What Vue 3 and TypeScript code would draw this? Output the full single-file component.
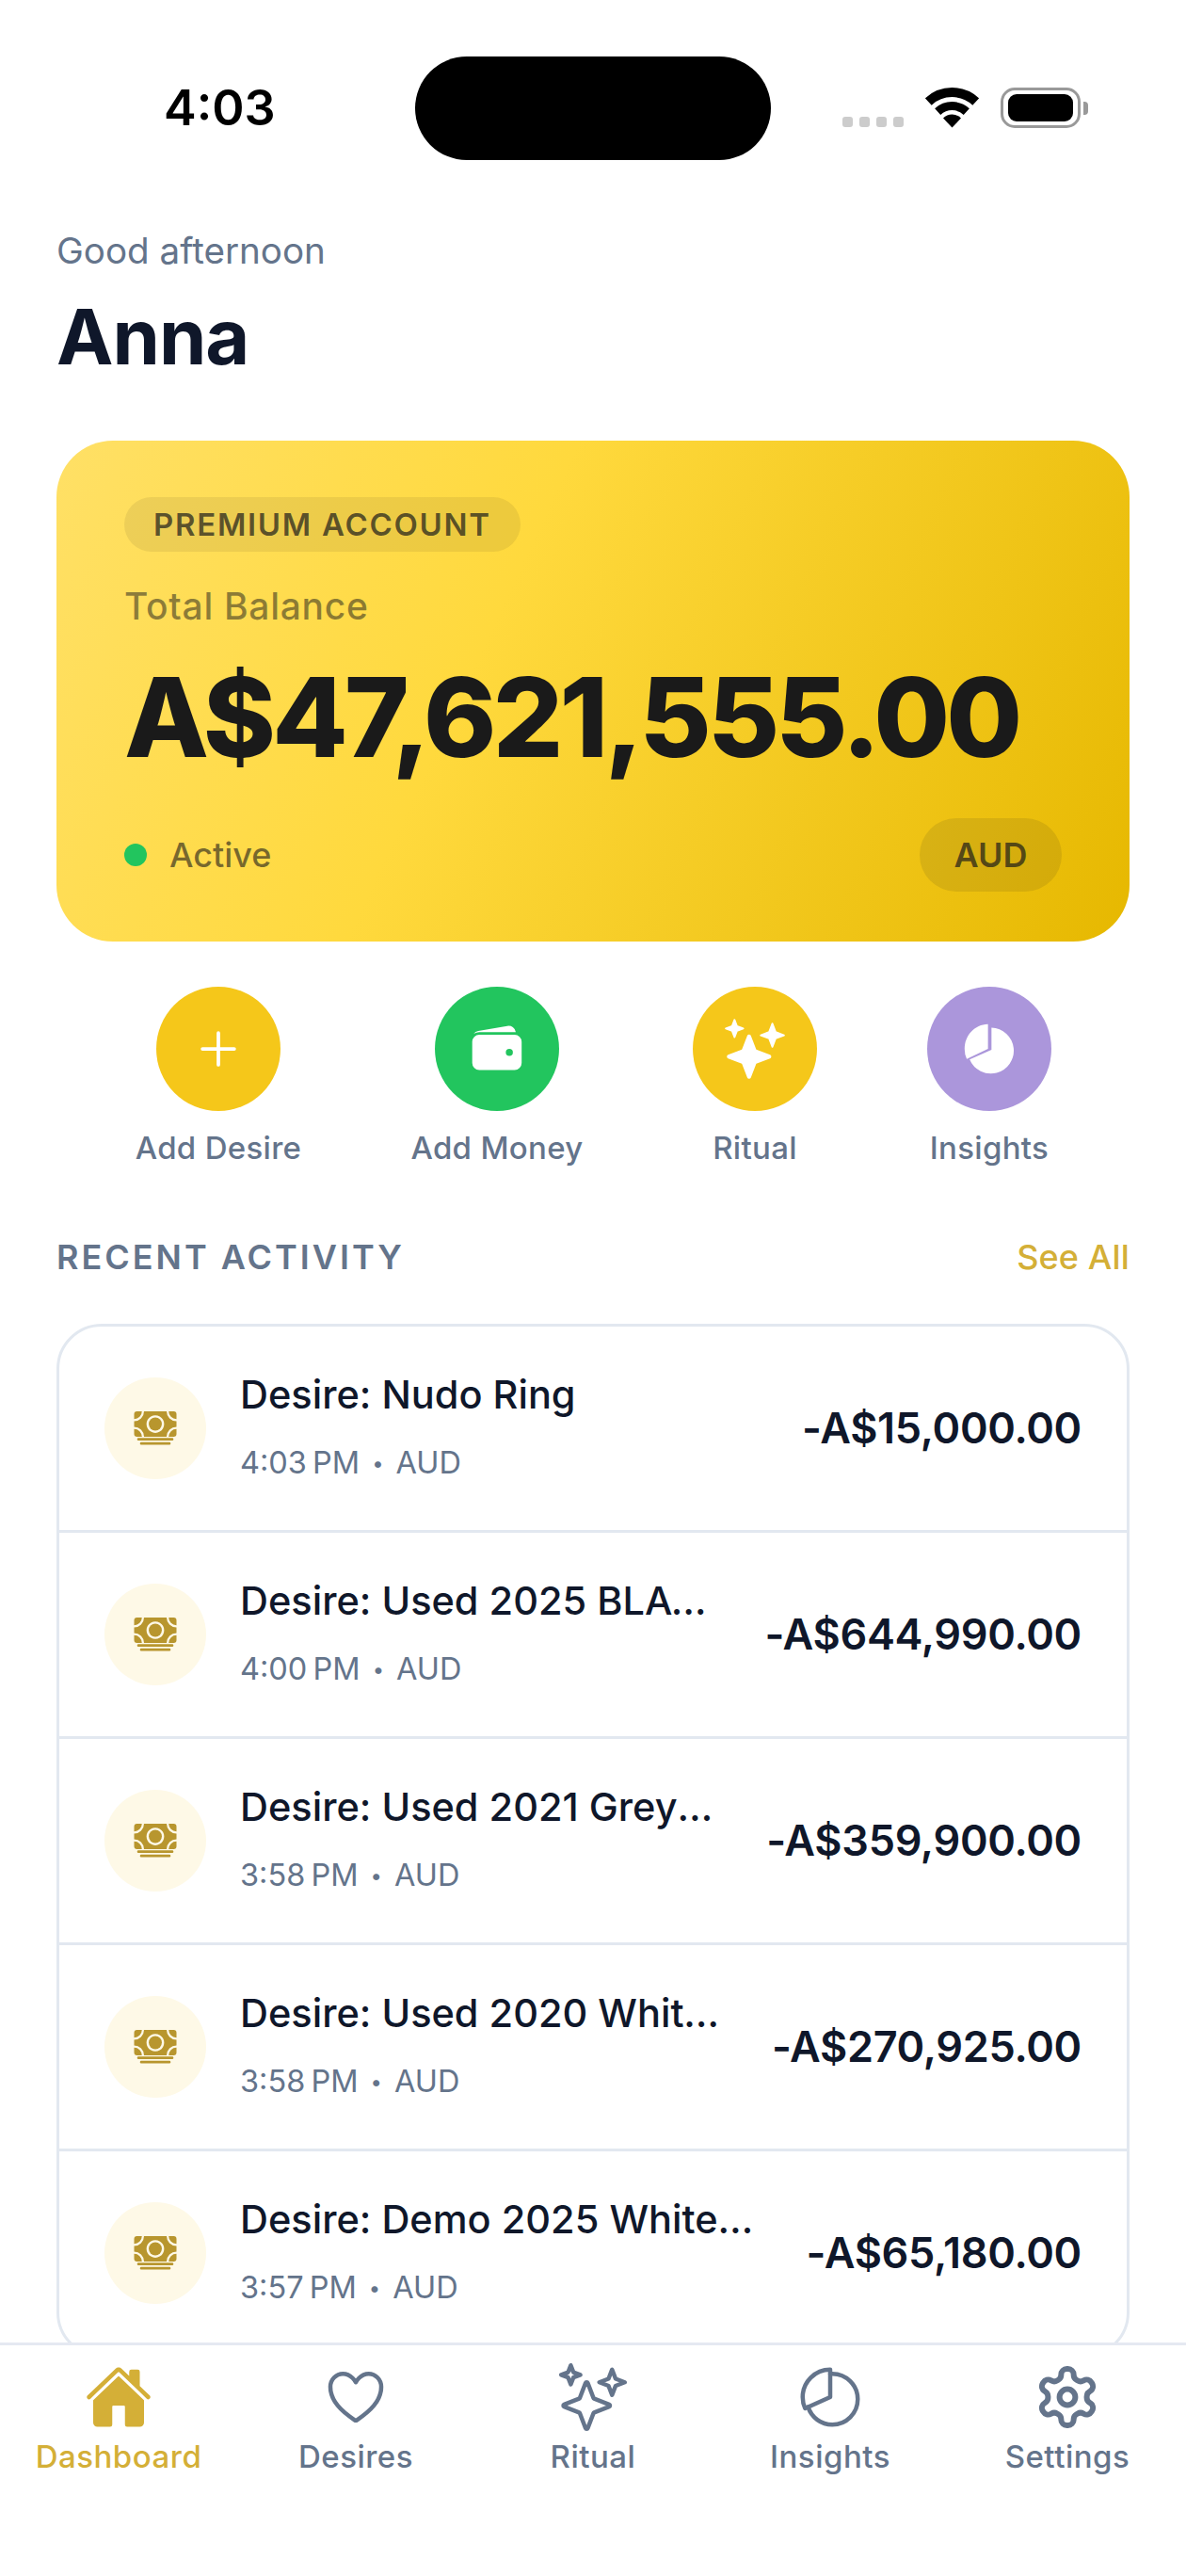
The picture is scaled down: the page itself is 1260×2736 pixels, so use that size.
<script setup lang="ts">
interface Row { title: string; time: string; amount: string }
const rows: Row[] = [
  { title: 'Desire: Nudo Ring', time: '4:03 PM', amount: '-A$15,000.00' },
  { title: 'Desire: Used 2025 BLACK Range Rover Sport', time: '4:00 PM', amount: '-A$644,990.00' },
  { title: 'Desire: Used 2021 Grey Porsche Cayenne', time: '3:58 PM', amount: '-A$359,900.00' },
  { title: 'Desire: Used 2020 White Mercedes G63', time: '3:58 PM', amount: '-A$270,925.00' },
  { title: 'Desire: Demo 2025 White Audi Q7', time: '3:57 PM', amount: '-A$65,180.00' },
]
</script>

<template>
  <div class="app">
    <header class="status">
      <span class="time">4:03</span>
      <div class="island"></div>
      <div class="sys">
        <div class="dots"><i></i><i></i><i></i><i></i></div>
        <svg class="wifi" width="57" height="43" viewBox="0 0 57 43">
          <path d="M3.3 15 A37 37 0 0 1 53.7 15" fill="none" stroke="#000" stroke-width="10" />
          <path d="M13.2 25.6 A22.5 22.5 0 0 1 43.8 25.6" fill="none" stroke="#000" stroke-width="9" />
          <path d="M28.5 42.5 L19 32.5 A13.5 13.5 0 0 1 38 32.5 Z" fill="#000" />
        </svg>
        <div class="battery"><div class="cell"></div></div>
        <div class="nub"></div>
      </div>
    </header>

    <main class="content">
      <p class="hello">Good afternoon</p>
      <h1 class="name">Anna</h1>

      <section class="card">
        <span class="badge">PREMIUM ACCOUNT</span>
        <p class="total">Total Balance</p>
        <p class="balance">A$47,621,555.00</p>
        <div class="card-foot">
          <div class="active"><span class="dot"></span>Active</div>
          <span class="cur">AUD</span>
        </div>
      </section>

      <div class="actions">
        <div class="act a1">
          <div class="circle gold">
            <svg width="60" height="60" viewBox="0 0 512 512" fill="none" stroke="#fff" stroke-width="32" stroke-linecap="round"><path d="M256 112v288M400 256H112" /></svg>
          </div>
          <span>Add Desire</span>
        </div>
        <div class="act a2">
          <div class="circle green">
            <svg width="60" height="60" viewBox="0 0 512 512" fill="#fff"><path d="M95.5 104h320a87.73 87.73 0 0111.18.71 66 66 0 00-77.51-55.56L86 94.08h-.3a66 66 0 00-41.07 26.13A87.57 87.57 0 0195.5 104z" /><path fill-rule="evenodd" d="M415.5 128h-320a64.07 64.07 0 00-64 64v192a64.07 64.07 0 0064 64h320a64.07 64.07 0 0064-64V192a64.07 64.07 0 00-64-64zM368 320a32 32 0 1132-32 32 32 0 01-32 32z" /></svg>
          </div>
          <span>Add Money</span>
        </div>
        <div class="act a3">
          <div class="circle gold">
            <svg width="66" height="66" viewBox="0 0 512 512" fill="#fff" stroke="#fff" stroke-width="14" stroke-linejoin="round"><path d="M259.92 262.91L216.4 149.77a9 9 0 00-16.8 0l-43.52 113.14a9 9 0 01-5.17 5.17L37.77 311.6a9 9 0 000 16.8l113.14 43.52a9 9 0 015.17 5.17l43.52 113.14a9 9 0 0016.8 0l43.52-113.14a9 9 0 015.17-5.17l113.14-43.52a9 9 0 000-16.8l-113.14-43.52a9 9 0 01-5.17-5.17z" /><path d="M108 68L88 16 68 68 16 88l52 20 20 52 20-52 52-20-52-20z" /><path d="M426.67 117.33L400 48l-26.67 69.33L304 144l69.33 26.67L400 240l26.67-69.33L496 144l-69.33-26.67z" /></svg>
          </div>
          <span>Ritual</span>
        </div>
        <div class="act a4">
          <div class="circle purple">
            <svg width="60" height="60" viewBox="0 0 512 512" fill="#fff"><path d="M244 32C122 36 32 134 32 256a224 224 0 0 0 20 92L244 256z" /><path d="M276 64A208 208 0 1 1 78 352L276 264z" /></svg>
          </div>
          <span>Insights</span>
        </div>
      </div>

      <div class="section-head">
        <h2>RECENT ACTIVITY</h2>
        <span class="see">See All</span>
      </div>

      <div class="list">
        <div v-for="r in rows" :key="r.title" class="row">
          <div class="ico">
            <svg width="48" height="48" viewBox="0 0 512 512" fill="#B8962E"><path d="M64 366H448a14 14 0 0 1 0 28H64a14 14 0 0 1 0-28zM96 414H416a14 14 0 0 1 0 28H96a14 14 0 0 1 0-28z" /><path fill-rule="evenodd" d="M128 64H384A112 112 0 0 0 496 176V240A112 112 0 0 0 384 352H128A112 112 0 0 0 16 240V176A112 112 0 0 0 128 64ZM256 108a100 100 0 1 0 .01 0Z" /><circle cx="256" cy="208" r="74" /><path d="M16 152A88 88 0 0 0 104 64H48A32 32 0 0 0 16 96ZM408 64A88 88 0 0 0 496 152V96A32 32 0 0 0 464 64ZM16 264A88 88 0 0 1 104 352H48A32 32 0 0 1 16 320ZM408 352A88 88 0 0 1 496 264V320A32 32 0 0 1 464 352Z" /></svg>
          </div>
          <div class="txt">
            <div class="title">{{ r.title }}</div>
            <div class="meta"><span class="clock">{{ r.time }}</span><span class="sep">•</span><span>AUD</span></div>
          </div>
          <div class="amt">{{ r.amount }}</div>
        </div>
      </div>
    </main>

    <nav class="tabs">
      <div class="tab on">
        <svg width="72" height="72" viewBox="0 0 512 512" fill="currentColor"><path d="M261.56 101.28a8 8 0 00-11.06 0L66.4 277.15a8 8 0 00-2.47 5.79L63.9 448a32 32 0 0032 32H192a16 16 0 0016-16V328a8 8 0 018-8h80a8 8 0 018 8v136a16 16 0 0016 16h96.06a32 32 0 0032-32V282.94a8 8 0 00-2.47-5.79z" /><path d="M490.91 244.15l-74.8-71.56V64a16 16 0 00-16-16h-48a16 16 0 00-16 16v32l-57.92-55.38C272.77 35.14 264.71 32 256 32c-8.68 0-16.72 3.14-22.14 8.63l-212.7 203.5c-6.22 6-7 15.87-1.34 22.37A16 16 0 0043 267.56L250.5 69.28a8 8 0 0111.06 0l207.52 198.28a16 16 0 0022.59-.44c6.14-6.36 5.63-16.86-.76-22.97z" /></svg>
        <span>Dashboard</span>
      </div>
      <div class="tab">
        <svg width="72" height="72" viewBox="0 0 512 512" fill="none" stroke="currentColor" stroke-width="32" stroke-linecap="round" stroke-linejoin="round"><path d="M352.92 80C288 80 256 144 256 144s-32-64-96.92-64c-52.76 0-94.54 44.14-95.08 96.81-1.1 109.33 86.73 187.08 183 252.42a16 16 0 0018 0c96.26-65.34 184.09-143.09 183-252.42-.54-52.67-42.32-96.81-95.08-96.81z" /></svg>
        <span>Desires</span>
      </div>
      <div class="tab">
        <svg width="72" height="72" viewBox="0 0 512 512" fill="none" stroke="currentColor" stroke-width="32" stroke-linecap="round" stroke-linejoin="round"><path d="M259.92 262.91L216.4 149.77a9 9 0 00-16.8 0l-43.52 113.14a9 9 0 01-5.17 5.17L37.77 311.6a9 9 0 000 16.8l113.14 43.52a9 9 0 015.17 5.17l43.52 113.14a9 9 0 0016.8 0l43.52-113.14a9 9 0 015.17-5.17l113.14-43.52a9 9 0 000-16.8l-113.14-43.52a9 9 0 01-5.17-5.17z" /><path d="M108 68L88 16 68 68 16 88l52 20 20 52 20-52 52-20-52-20z" /><path d="M426.67 117.33L400 48l-26.67 69.33L304 144l69.33 26.67L400 240l26.67-69.33L496 144l-69.33-26.67z" /></svg>
        <span>Ritual</span>
      </div>
      <div class="tab">
        <svg width="72" height="72" viewBox="0 0 512 512" fill="none" stroke="currentColor" stroke-width="32" stroke-linecap="round" stroke-linejoin="round"><path d="M256.05 80.65Q263.94 80 272 80c106 0 192 86 192 192s-86 192-192 192A192.09 192.09 0 0189.12 330.65" /><path d="M256 48C141.12 48 48 141.12 48 256a207.29 207.29 0 0018.09 85L256 256z" /></svg>
        <span>Insights</span>
      </div>
      <div class="tab">
        <svg width="72" height="72" viewBox="0 0 24 24" fill="none" stroke="currentColor" stroke-width="2" stroke-linecap="round" stroke-linejoin="round"><path d="M12.22 2h-.44a2 2 0 0 0-2 2v.18a2 2 0 0 1-1 1.73l-.43.25a2 2 0 0 1-2 0l-.15-.08a2 2 0 0 0-2.73.73l-.22.38a2 2 0 0 0 .73 2.73l.15.1a2 2 0 0 1 1 1.72v.51a2 2 0 0 1-1 1.74l-.15.09a2 2 0 0 0-.73 2.73l.22.38a2 2 0 0 0 2.73.73l.15-.08a2 2 0 0 1 2 0l.43.25a2 2 0 0 1 1 1.73V20a2 2 0 0 0 2 2h.44a2 2 0 0 0 2-2v-.18a2 2 0 0 1 1-1.73l.43-.25a2 2 0 0 1 2 0l.15.08a2 2 0 0 0 2.73-.73l.22-.39a2 2 0 0 0-.73-2.73l-.15-.08a2 2 0 0 1-1-1.74v-.5a2 2 0 0 1 1-1.74l.15-.09a2 2 0 0 0 .73-2.73l-.22-.38a2 2 0 0 0-2.73-.73l-.15.08a2 2 0 0 1-2 0l-.43-.25a2 2 0 0 1-1-1.73V4a2 2 0 0 0-2-2z" /><circle cx="12" cy="12" r="2.8" /></svg>
        <span>Settings</span>
      </div>
    </nav>
  </div>
</template>

<style>
html, body { margin: 0; background: #fff; }
</style>

<style scoped>
* { box-sizing: border-box; }
.app {
  position: relative;
  width: 1260px;
  height: 2736px;
  overflow: hidden;
  background: #fff;
  font-family: Inter, "Liberation Sans", sans-serif;
  color: #0f172a;
}
p, h1, h2 { margin: 0; }

.status {
  position: relative;
  height: 243px;
  display: flex;
  justify-content: space-between;
  padding: 88px 104px 0 174px;
}
.time { font-size: 52px; line-height: 54px; font-weight: 600; color: #000; }
.island {
  position: absolute;
  left: 441px;
  top: 60px;
  width: 378px;
  height: 110px;
  border-radius: 55px;
  background: #000;
}
.sys { display: flex; align-items: flex-start; padding-top: 5px; }
.dots { display: flex; gap: 7px; margin-top: 31px; margin-right: 23px; }
.dots i { width: 11px; height: 11px; border-radius: 3px; background: #ccc; }
.wifi { display: block; margin-right: 23px; }
.battery {
  width: 85px;
  height: 43px;
  border: 3px solid #999;
  border-radius: 15px;
  padding: 4px 5px;
}
.cell { height: 100%; border-radius: 9px; background: #000; }
.nub {
  width: 5px;
  height: 14px;
  margin: 15px 0 0 3px;
  border-radius: 0 4px 4px 0;
  background: #999;
}

.content { padding: 0 60px; }
.hello { font-size: 38.6px; line-height: 46px; color: #64748b; }
.name {
  margin-top: 21px;
  font-size: 81px;
  line-height: 96px;
  font-weight: 700;
  letter-spacing: -1px;
  color: #0f172a;
}

.card {
  margin-top: 62px;
  height: 532px;
  padding: 60px 72px 0;
  border-radius: 60px;
  background: linear-gradient(115deg, #ffe066 0%, #ffd93d 40%, #e6b800 100%);
}
.badge {
  display: inline-block;
  height: 58px;
  padding: 0 31px;
  border-radius: 29px;
  background: rgba(26, 26, 26, 0.08);
  font-size: 33px;
  line-height: 58px;
  font-weight: 600;
  letter-spacing: 1.7px;
  color: rgba(26, 26, 26, 0.7);
}
.total {
  margin-top: 35px;
  font-size: 39px;
  line-height: 46px;
  font-weight: 500;
  letter-spacing: 0.7px;
  color: rgba(26, 26, 26, 0.5);
}
.balance {
  margin-top: 29px;
  font-size: 117px;
  line-height: 132px;
  font-weight: 800;
  letter-spacing: -3.8px;
  color: #1a1a1a;
}
.card-foot {
  margin-top: 41px;
  display: flex;
  align-items: center;
  justify-content: space-between;
}
.active {
  display: flex;
  align-items: center;
  gap: 24px;
  font-size: 36px;
  font-weight: 500;
  color: rgba(26, 26, 26, 0.6);
}
.dot { width: 24px; height: 24px; border-radius: 50%; background: #22c55e; }
.cur {
  width: 151px;
  height: 78px;
  border-radius: 39px;
  text-align: center;
  background: rgba(26, 26, 26, 0.1);
  font-size: 36px;
  line-height: 78px;
  font-weight: 600;
  color: rgba(26, 26, 26, 0.7);
}

.actions {
  margin-top: 48px;
  display: flex;
  padding-left: 83px;
}
.act {
  display: flex;
  flex-direction: column;
  align-items: center;
  gap: 19px;
  font-size: 33px;
  line-height: 40px;
  font-weight: 500;
  letter-spacing: 0.3px;
  color: #64748b;
  white-space: nowrap;
}
.a1 { width: 178px; }
.a2 { width: 178px; margin-left: 118px; }
.a3 { width: 132px; margin-left: 119px; }
.a4 { width: 132px; margin-left: 117px; }
.circle {
  width: 132px;
  height: 132px;
  border-radius: 50%;
  display: flex;
  align-items: center;
  justify-content: center;
}
.gold { background: #f5c71a; }
.green { background: #22c55e; }
.purple { background: #ab96db; }

.section-head {
  margin-top: 74px;
  display: flex;
  align-items: center;
  justify-content: space-between;
}
h2 {
  font-size: 36px;
  line-height: 44px;
  font-weight: 600;
  letter-spacing: 3px;
  color: #64748b;
}
.see {
  font-size: 36px;
  line-height: 44px;
  font-weight: 500;
  letter-spacing: 0.15px;
  color: #d4af37;
}

.list {
  margin-top: 49px;
  border: 3px solid #e2e8f0;
  border-radius: 48px;
  overflow: hidden;
  background: #fff;
}
.row {
  height: 219px;
  display: flex;
  align-items: center;
  padding: 0 48px;
  border-bottom: 3px solid #e2e8f0;
}
.row:last-child { border-bottom: none; height: 216px; }
.ico {
  flex: none;
  width: 108px;
  height: 108px;
  margin-right: 36px;
  border-radius: 50%;
  background: #fef9e7;
  display: flex;
  align-items: center;
  justify-content: center;
}
.txt { flex: 1; min-width: 0; padding: 0 52px 5px 0; }
.title {
  font-size: 41.5px;
  line-height: 52px;
  font-weight: 500;
  color: #0f172a;
  white-space: nowrap;
  overflow: hidden;
  text-overflow: ellipsis;
}
.meta {
  margin-top: 27px;
  display: flex;
  align-items: center;
  font-size: 32.5px;
  line-height: 40px;
  color: #64748b;
}
.clock { word-spacing: -3px; }
.sep { margin: 0 13px; font-size: 22px; }
.amt {
  flex: none;
  font-size: 45px;
  line-height: 54px;
  font-weight: 600;
  letter-spacing: -0.3px;
  color: #0f172a;
}

.tabs {
  position: absolute;
  left: 0;
  right: 0;
  bottom: 0;
  height: 248px;
  display: grid;
  grid-template-columns: repeat(5, 1fr);
  padding-top: 19px;
  background: #fff;
  border-top: 3px solid #e5e9f2;
}
.tab {
  display: flex;
  flex-direction: column;
  align-items: center;
  gap: 7px;
  font-size: 33px;
  line-height: 40px;
  font-weight: 500;
  letter-spacing: 0.5px;
  color: #64748b;
}
.tab.on { color: #d4af37; }
</style>
